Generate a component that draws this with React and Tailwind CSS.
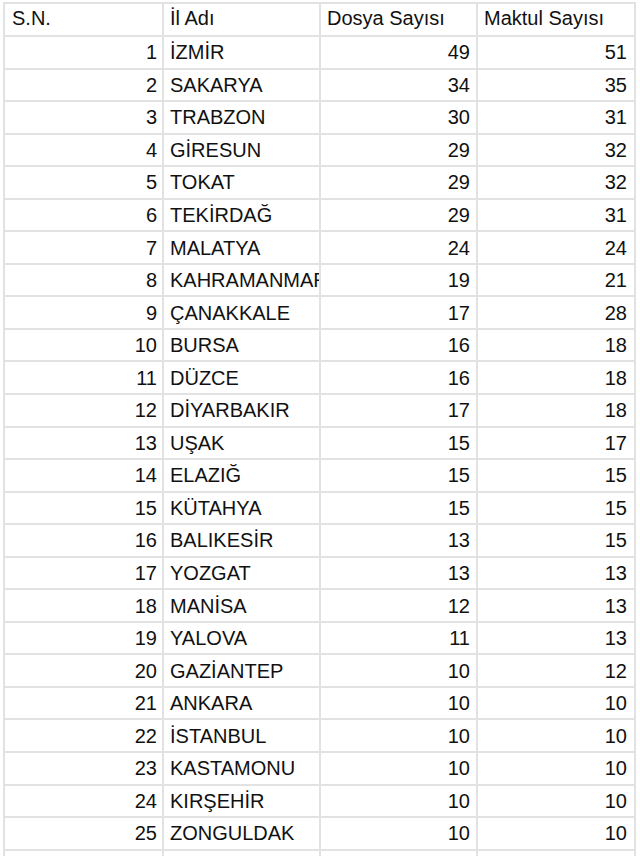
import React from "react";

const rows = [
    [1, "İZMİR", 49, 51],
    [2, "SAKARYA", 34, 35],
    [3, "TRABZON", 30, 31],
    [4, "GİRESUN", 29, 32],
    [5, "TOKAT", 29, 32],
    [6, "TEKİRDAĞ", 29, 31],
    [7, "MALATYA", 24, 24],
    [8, "KAHRAMANMARAŞ", 19, 21],
    [9, "ÇANAKKALE", 17, 28],
    [10, "BURSA", 16, 18],
    [11, "DÜZCE", 16, 18],
    [12, "DİYARBAKIR", 17, 18],
    [13, "UŞAK", 15, 17],
    [14, "ELAZIĞ", 15, 15],
    [15, "KÜTAHYA", 15, 15],
    [16, "BALIKESİR", 13, 15],
    [17, "YOZGAT", 13, 13],
    [18, "MANİSA", 12, 13],
    [19, "YALOVA", 11, 13],
    [20, "GAZİANTEP", 10, 12],
    [21, "ANKARA", 10, 10],
    [22, "İSTANBUL", 10, 10],
    [23, "KASTAMONU", 10, 10],
    [24, "KIRŞEHİR", 10, 10],
    [25, "ZONGULDAK", 10, 10],
];

const cols = "grid grid-cols-[159px_157px_157px_158px]";
const cell = "border-r-2 border-b-2 border-[#e2e2e2] overflow-hidden whitespace-nowrap flex items-center";

export default function App() {
    return (
        <div className="w-[640px] h-[856px] bg-white overflow-hidden pt-[2px] pl-[3px] font-['Liberation_Sans',Arial,sans-serif] text-[20px] text-[#111]">
            <div className="border-l-2 border-t-2 border-[#e2e2e2] w-[633px]">
                <div className={cols + " h-[33px]"}>
                    <div className={cell + " pl-[7px] pb-[3px]"}>S.N.</div>
                    <div className={cell + " pl-[6px] pb-[3px]"}>İl Adı</div>
                    <div className={cell + " pl-[6px] pb-[3px]"}>Dosya Sayısı</div>
                    <div className={cell + " pl-[6px] pb-[3px]"}>Maktul Sayısı</div>
                </div>
                {rows.map((r) => (
                    <div key={r[0]} className={cols + " h-[32.56px]"}>
                        <div className={cell + " justify-end pr-[5px]"}>{r[0]}</div>
                        <div className={cell + " pl-[6px]"}>{r[1]}</div>
                        <div className={cell + " justify-end pr-[6px]"}>{r[2]}</div>
                        <div className={cell + " justify-end pr-[7px]"}>{r[3]}</div>
                    </div>
                ))}
                <div className={cols + " h-[32.56px]"}>
                    <div className={cell}></div>
                    <div className={cell}></div>
                    <div className={cell}></div>
                    <div className={cell}></div>
                </div>
            </div>
        </div>
    );
}
